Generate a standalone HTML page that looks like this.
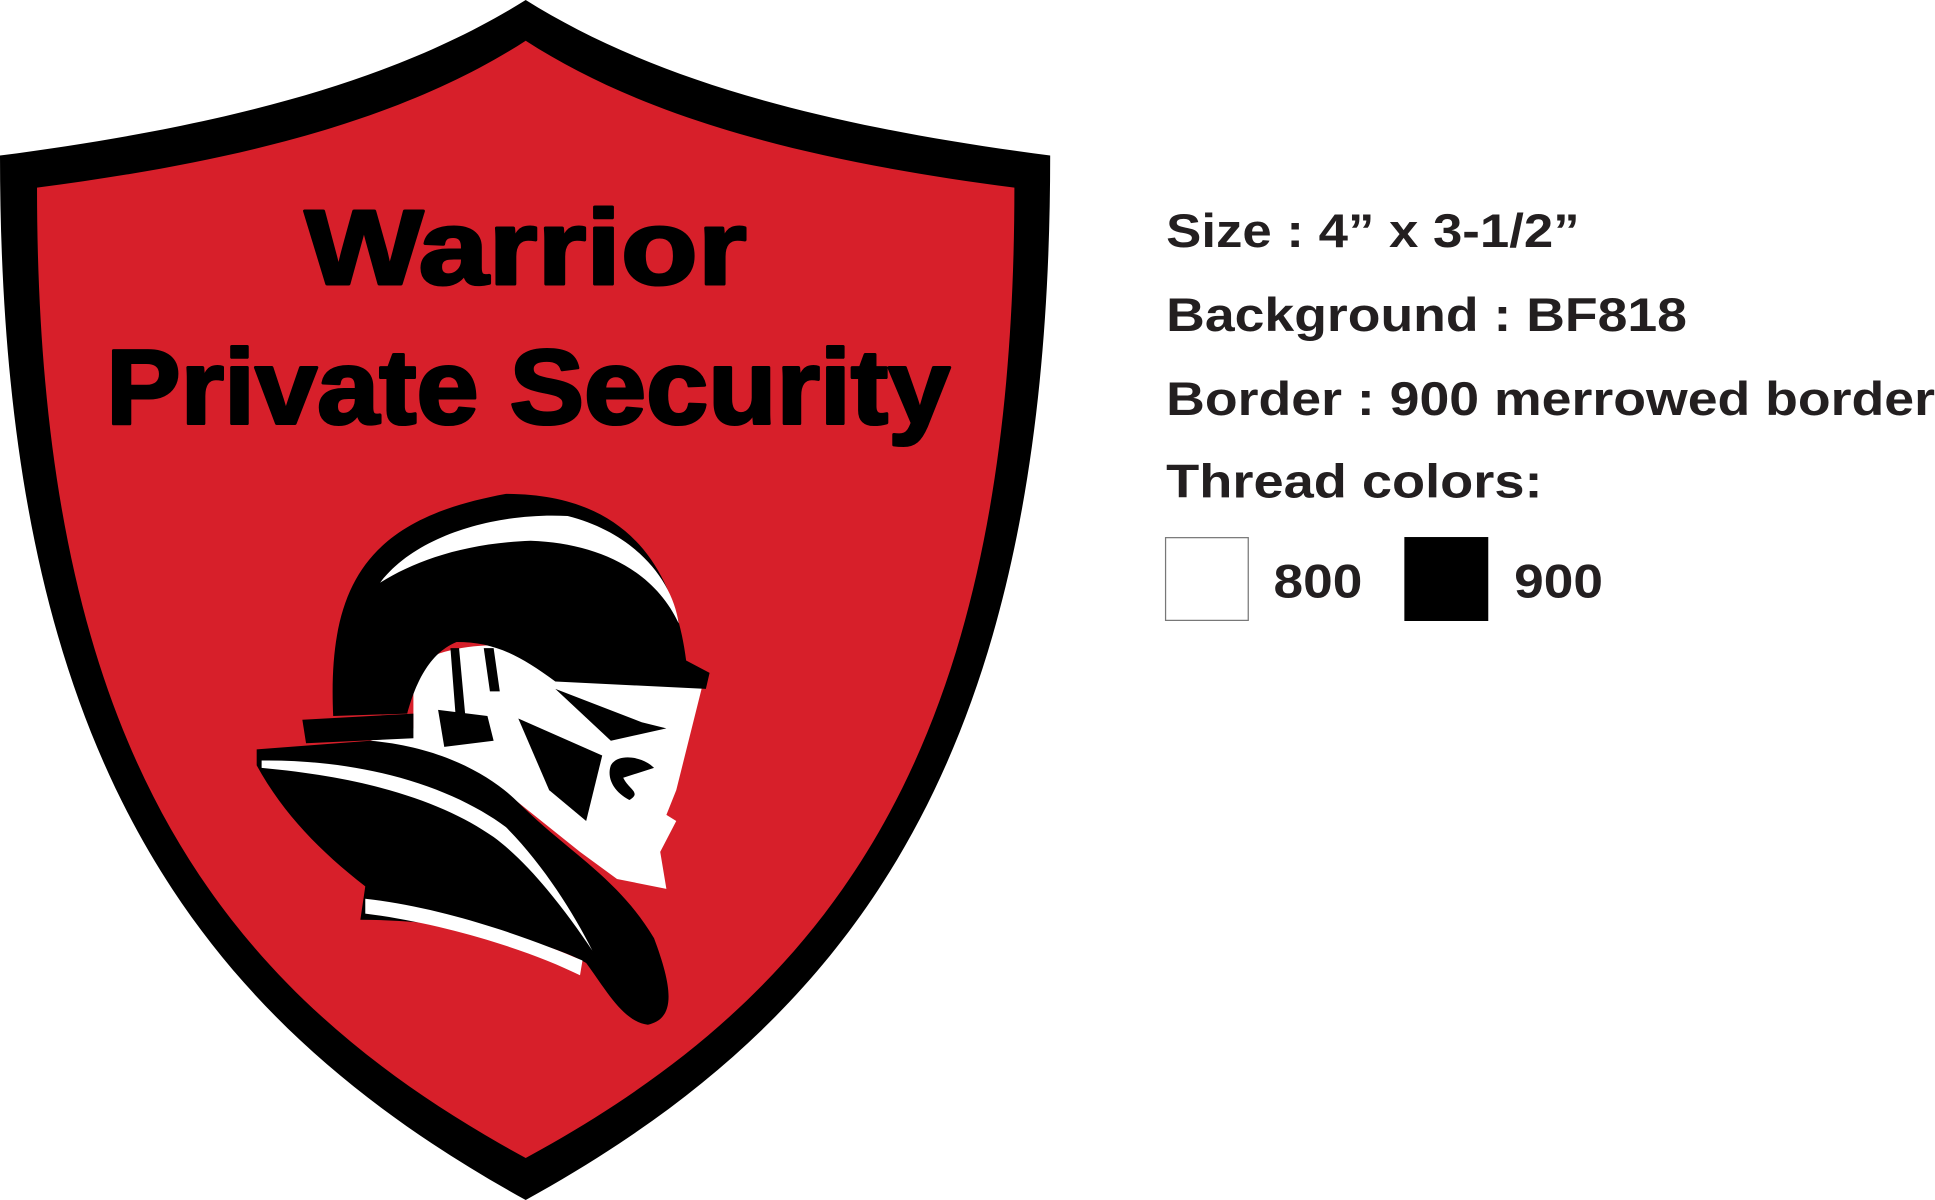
<!DOCTYPE html>
<html><head><meta charset="utf-8"><style>
html,body{margin:0;padding:0;background:#fff;width:1935px;height:1200px;overflow:hidden}
svg{display:block}
</style></head><body>
<svg width="1935" height="1200" viewBox="0 0 1568 972" preserveAspectRatio="none" xmlns="http://www.w3.org/2000/svg">
<path d="M426,0 C330,60 200,100 0,126 C0,600 150,820 426,972 C702,820 851,600 851,126 C651,100 522,60 426,0 Z" fill="#000"/>
<path d="M426,33 C330,95 200,130 30,152 C30,600 172,800 426,938 C680,800 822,600 822,152 C652,130 522,95 426,33 Z" fill="#d71f2a"/>
<g font-family="Liberation Sans, Arial, sans-serif" font-weight="bold" fill="#000" stroke="#000" stroke-width="2.5" stroke-linejoin="round">
<text x="247" y="230" font-size="86" textLength="358" lengthAdjust="spacingAndGlyphs">Warrior</text>
<text x="86" y="343" font-size="86" textLength="684" lengthAdjust="spacingAndGlyphs">Private Security</text>
</g>
<g>
<path d="M335,540 C360,520 420,518 450,530 L570,552 L548,640 L540,660 L548,665 L535,690 L540,720 L500,712 L470,690 L420,650 C380,620 340,605 300,600 L335,590 Z" fill="#fff"/>
<path d="M270,580 C265,470 300,420 410,400 C500,400 545,450 556,535 L575,545 L572,558 L450,552 C420,530 400,520 370,520 C345,530 335,560 330,578 Z" fill="#000"/>
<path d="M308,472 C340,430 410,415 460,418 C515,432 545,470 550,505 C530,462 485,440 430,438 C375,440 335,455 308,472 Z" fill="#fff"/>
<path d="M365,525 L372,525 L378,590 L370,590 Z M392,525 L400,525 L405,560 L397,560 Z" fill="#000"/>
<path d="M420,582 L488,612 L475,665 L445,640 Z" fill="#000"/>
<path d="M450,558 L520,585 L540,590 L495,600 Z" fill="#000"/>
<path d="M495,620 C500,610 520,612 530,622 L505,630 C510,640 520,642 510,648 C495,640 492,628 495,620 Z" fill="#000"/>
<path d="M355,575 L395,580 L400,600 L360,605 Z" fill="#000"/>
<path d="M245,583 L335,578 L335,598 L248,602 Z" fill="#000"/>
<path d="M208,607 L300,600 C360,605 400,630 420,650 C460,690 500,710 530,760 C545,800 548,825 525,830 C505,828 490,800 475,780 C440,760 360,745 292,745 L296,718 C260,690 230,660 208,620 Z" fill="#000"/>
<path d="M212,616 C300,615 370,640 410,670 C440,700 465,740 480,770 C460,740 430,700 400,678 C360,650 300,630 212,622 Z" fill="#fff"/>
<path d="M296,728 C360,735 430,760 472,778 L470,790 C430,770 360,748 296,740 Z" fill="#fff"/>
</g>
<g font-family="Liberation Sans, Arial, sans-serif" font-weight="bold" fill="#231f20" font-size="38">
<text x="945" y="200" textLength="335" lengthAdjust="spacingAndGlyphs">Size : 4” x 3-1/2”</text>
<text x="945" y="268" textLength="422" lengthAdjust="spacingAndGlyphs">Background : BF818</text>
<text x="945" y="336" textLength="623" lengthAdjust="spacingAndGlyphs">Border : 900 merrowed border</text>
<text x="945" y="403" textLength="305" lengthAdjust="spacingAndGlyphs">Thread colors:</text>
<text x="1032" y="484" textLength="72" lengthAdjust="spacingAndGlyphs">800</text>
<text x="1227" y="484" textLength="72" lengthAdjust="spacingAndGlyphs">900</text>
</g>
<rect x="944.5" y="435.5" width="67" height="67" fill="#fff" stroke="#777" stroke-width="1"/>
<rect x="1138" y="435" width="68" height="68" fill="#000"/>
</svg>
</body></html>
